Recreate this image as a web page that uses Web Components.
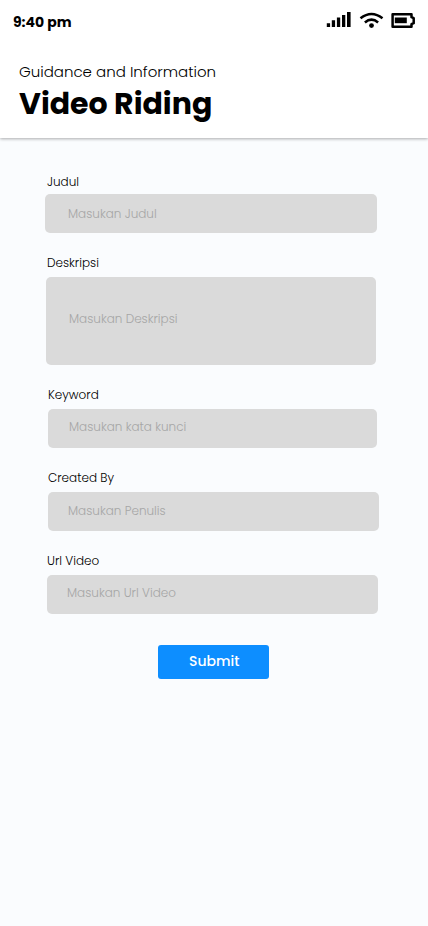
<!DOCTYPE html>
<html lang="id">
<head>
<meta charset="utf-8">
<meta name="viewport" content="width=device-width, initial-scale=1">
<title>Video Riding</title>
<style>
html, body { margin: 0; background: #fafcfe; }
body { font-family: Poppins, Inter, "Liberation Sans", sans-serif; color: #000; }
</style>
</head>
<body>
<riding-page></riding-page>
<script>
const define = (name, html, setup) => {
  const template = document.createElement('template');
  template.innerHTML = html;
  customElements.define(name, class extends HTMLElement {
    constructor() {
      super();
      this.attachShadow({ mode: 'open' }).append(template.content.cloneNode(true));
    }
    connectedCallback() { if (setup) setup(this, this.shadowRoot); }
  });
};

// A single line of text that never wraps.
define('text-line', `<style>
    :host { display: block; white-space: nowrap; }
  </style><slot></slot>`);

define('status-bar', `
  <style>
    :host { display: flex; justify-content: space-between; height: 44px; padding: 0 12px 0 13px; }
    text-line { font-size: 14px; font-weight: 700; line-height: 20px; padding-top: 12px; }
    svg { display: block; margin-top: 8px; }
  </style>
  <text-line>9:40 pm</text-line>
  <svg width="90" height="24" viewBox="326 8 90 24">
    <path d="M326.8 23.2h3.3V27h-3.3zM331.8 20.3h3.3V27h-3.3zM336.9 17.5h3.3V27h-3.3zM342 15h3.3V27H342zM347 12h3.6v15H347z"/>
    <g fill="none" stroke="#000" stroke-width="2.6">
      <path d="M360.5 18.2Q371.5 9.8 382.5 18.2"/>
      <path d="M364.9 22.4Q371.5 17 378.1 22.4"/>
    </g>
    <circle cx="371.5" cy="25.6" r="2.4"/>
    <path d="M392.6 14.2h18.9v3l2.2 1v5l-2.2 1v2.600h-18.900z" fill="none" stroke="#000" stroke-width="2.5" stroke-linejoin="round"/>
    <path d="M394.8 17.5h12v5.7h-12z"/>
  </svg>`);

define('page-header', `
  <style>
    :host { display: block; height: 138px; box-sizing: border-box; background: #fff; box-shadow: 0 1px 3px rgba(0,0,0,.32); position: relative; }
    .titles { padding: 17px 19px 0; }
    .sub { font-size: 15px; font-weight: 300; line-height: 22px; }
    .title { font-size: 30px; font-weight: 700; line-height: 40px; padding-top: 1px; }
  </style>
  <status-bar></status-bar>
  <div class="titles">
    <text-line class="sub">Guidance and Information</text-line>
    <text-line class="title">Video Riding</text-line>
  </div>`);

define('form-field', `
  <style>
    :host { display: block; box-sizing: border-box; font-size: 12px; line-height: 18px; }
    .label { height: 18px; font-weight: 300; color: #000; }
    .box { box-sizing: border-box; background: #dadada; border-radius: 5px; color: #a6a6a6; font-weight: 300; }
  </style>
  <text-line class="label"><slot></slot></text-line>
  <div class="box"><text-line><slot name="hint"></slot></text-line></div>`, (host, root) => {
  const [labelX, gap, boxX, boxW, boxH, hintX, hintY] =
    host.getAttribute('metrics').split(' ').map(Number);
  root.querySelector('.label').style.marginLeft = labelX + 'px';
  root.querySelector('.box').style.cssText =
    `margin:${gap}px 0 0 ${boxX}px;width:${boxW}px;height:${boxH}px;padding:${hintY}px 0 0 ${hintX}px`;
});

define('submit-button', `
  <style>
    :host { display: block; }
    button { display: block; width: 111px; height: 34px; border: 0; border-radius: 3px; padding: 0 0 2px 31px; margin: 0; background: #0d8eff; color: #fff; font: 500 14px/20px Poppins, Inter, "Liberation Sans", sans-serif; text-align: left; }
  </style>
  <button type="button"><text-line><slot></slot></text-line></button>`);

define('riding-page', `
  <style>
    :host { display: block; width: 428px; height: 926px; background: #fafcfe; overflow: hidden; }
    form { display: flex; flex-direction: column; padding-top: 35px; }
    form-field + form-field { margin-top: 21px; }
    submit-button { margin: 31px 0 0 158px; }
  </style>
  <page-header></page-header>
  <form>
    <form-field metrics="47 3 45 332 39 23 11">Judul<span slot="hint">Masukan Judul</span></form-field>
    <form-field metrics="47 5 46 330 88 23 33">Deskripsi<span slot="hint">Masukan Deskripsi</span></form-field>
    <form-field metrics="48 5 48 329 39 21 9">Keyword<span slot="hint">Masukan kata kunci</span></form-field>
    <form-field metrics="48 5 48 331 39 20 10">Created By<span slot="hint">Masukan Penulis</span></form-field>
    <form-field metrics="47 5 47 331 39 20 9">Url Video<span slot="hint">Masukan Url Video</span></form-field>
    <submit-button>Submit</submit-button>
  </form>`);
</script>
</body>
</html>
